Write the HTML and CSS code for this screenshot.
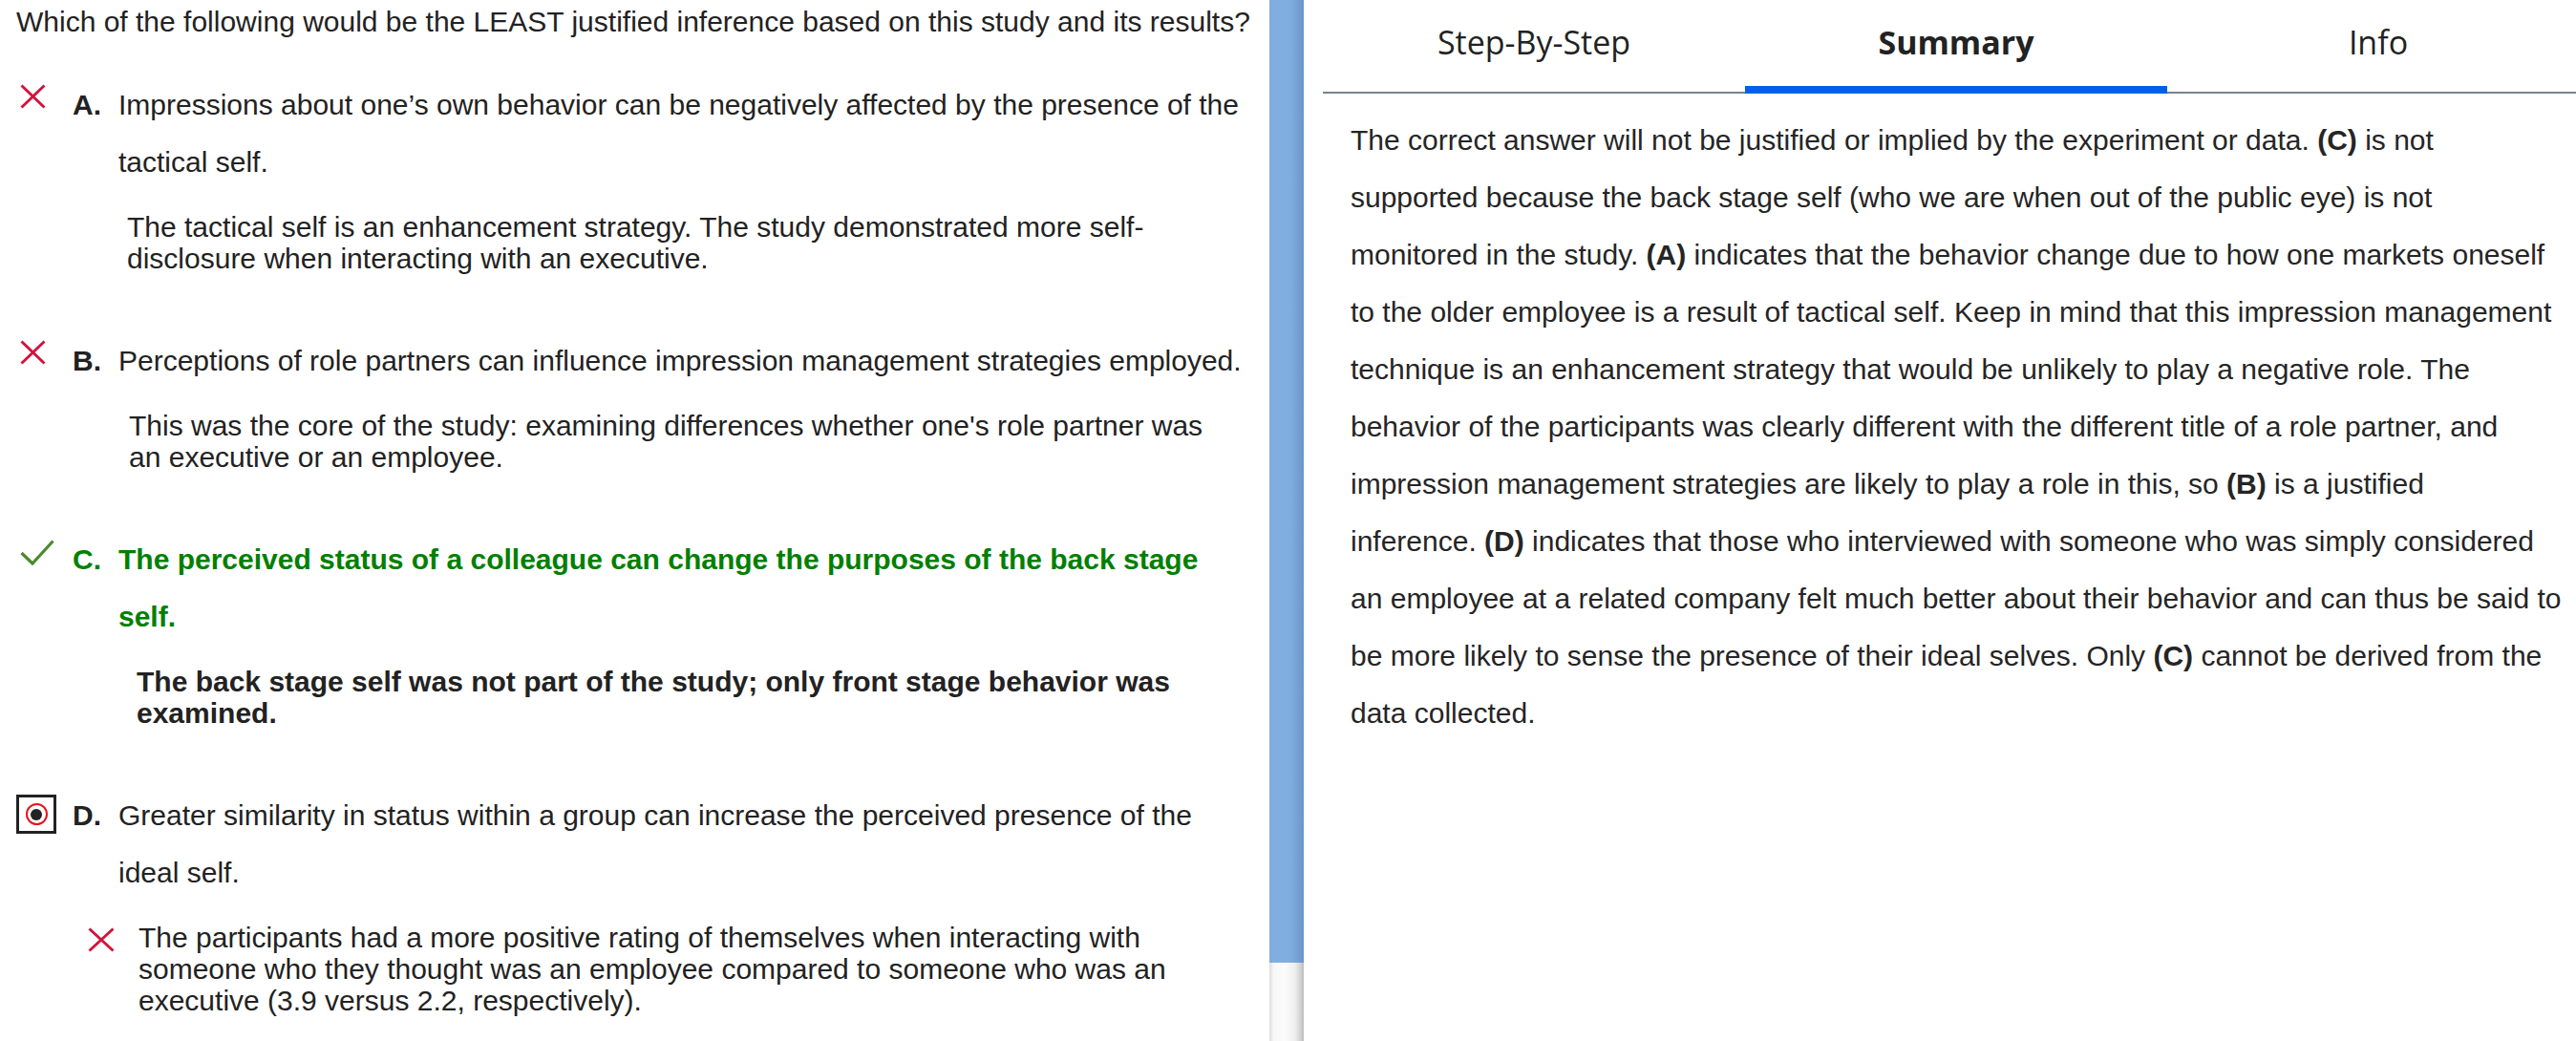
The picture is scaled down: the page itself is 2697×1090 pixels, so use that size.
FILE: index.html
```html
<!DOCTYPE html>
<html lang="en">
<head>
<meta charset="utf-8">
<title>Question review</title>
<link rel="stylesheet" href="styles.css">
</head>
<body>
<div class="page">
  <main class="question-pane">
    <p class="question">Which of the following would be the LEAST justified inference based on this study and its results?</p>

    <div class="choice">
      <div class="choice-row">
        <span class="mark mark-x"><svg width="27" height="26" viewBox="0 0 27 26"><path d="M1.5 1.5 L25.5 24.5 M25.5 1.5 L1.5 24.5" stroke="#d3143b" stroke-width="3" fill="none"/></svg></span>
        <span class="letter">A.</span>
        <span class="choice-text">Impressions about one’s own behavior can be negatively affected by the presence of the tactical self.</span>
      </div>
      <p class="feedback fb-a">The tactical self is an enhancement strategy. The study demonstrated more self-disclosure when interacting with an executive.</p>
    </div>

    <div class="choice">
      <div class="choice-row">
        <span class="mark mark-x"><svg width="27" height="26" viewBox="0 0 27 26"><path d="M1.5 1.5 L25.5 24.5 M25.5 1.5 L1.5 24.5" stroke="#d3143b" stroke-width="3" fill="none"/></svg></span>
        <span class="letter">B.</span>
        <span class="choice-text">Perceptions of role partners can influence impression management strategies employed.</span>
      </div>
      <p class="feedback fb-b">This was the core of the study: examining differences whether one's role partner was an executive or an employee.</p>
    </div>

    <div class="choice choice-correct">
      <div class="choice-row">
        <span class="mark mark-check"><svg width="36" height="27" viewBox="0 0 36 27"><path d="M1.5 14 L13 25 L34.5 1.5" stroke="#4a8a2f" stroke-width="3.2" fill="none"/></svg></span>
        <span class="letter">C.</span>
        <span class="choice-text">The perceived status of a colleague can change the purposes of the back stage self.</span>
      </div>
      <p class="feedback fb-c">The back stage self was not part of the study; only front stage behavior was examined.</p>
    </div>

    <div class="choice">
      <div class="choice-row">
        <span class="mark mark-radio"><span class="radio"><span class="radio-ring"><span class="radio-dot"></span></span></span></span>
        <span class="letter">D.</span>
        <span class="choice-text">Greater similarity in status within a group can increase the perceived presence of the ideal self.</span>
      </div>
      <div class="feedback fb-d">
        <span class="fb-icon"><svg width="28" height="26" viewBox="0 0 28 26"><path d="M1.5 1.5 L26.5 24.5 M26.5 1.5 L1.5 24.5" stroke="#d3143b" stroke-width="3" fill="none"/></svg></span>
        <p class="fb-text">The participants had a more positive rating of themselves when interacting with someone who they thought was an employee compared to someone who was an executive (3.9 versus 2.2, respectively).</p>
      </div>
    </div>
  </main>

  <div class="scrollbar">
    <div class="scroll-thumb"></div>
    <div class="scroll-track"></div>
  </div>

  <aside class="explain-pane">
    <nav class="tabs">
      <div class="tab">Step-By-Step</div>
      <div class="tab tab-active">Summary</div>
      <div class="tab">Info</div>
    </nav>
    <p class="summary">The correct answer will not be justified or implied by the experiment or data. <b>(C)</b> is not supported because the back stage self (who we are when out of the public eye) is not monitored in the study. <b>(A)</b> indicates that the behavior change due to how one markets oneself to the older employee is a result of tactical self. Keep in mind that this impression management technique is an enhancement strategy that would be unlikely to play a negative role. The behavior of the participants was clearly different with the different title of a role partner, and impression management strategies are likely to play a role in this, so <b>(B)</b> is a justified<br>inference. <b>(D)</b> indicates that those who interviewed with someone who was simply considered an employee at a related company felt much better about their behavior and can thus be said to be more likely to sense the presence of their ideal selves. Only <b>(C)</b> cannot be derived from the data collected.</p>
  </aside>
</div>
</body>
</html>
```

FILE: styles.css
```css
html, body {
  margin: 0;
  padding: 0;
  background: #ffffff;
}

.page {
  display: flex;
  height: 1090px;
  overflow: hidden;
  background: #ffffff;
}

/* ---------- left: question pane ---------- */
.question-pane {
  flex: 0 0 1329px;
  font-family: "Liberation Sans", Arial, sans-serif;
  font-size: 30px;
  color: #222222;
}

.question {
  margin: 0 0 41px;
  padding: 7px 0 0 17px;
  line-height: 32px;
}

.choice + .choice {
  margin-top: 61px;
}

.choice-row {
  display: grid;
  grid-template-columns: 76px 48px 1184px;
  line-height: 60px;
}

.mark {
  align-self: start;
  line-height: 0;
  padding-top: 8px;
}

.mark-x {
  padding-left: 21px;
}

.mark-check {
  padding-left: 21px;
  padding-top: 9px;
}

.mark-radio {
  padding-left: 17px;
}

.letter {
  font-weight: bold;
}

.choice-correct .choice-row {
  color: #008000;
  font-weight: bold;
}

.radio {
  box-sizing: border-box;
  width: 42px;
  height: 41px;
  border: 3px solid #222222;
  display: flex;
  align-items: center;
  justify-content: center;
}

.radio-ring {
  box-sizing: border-box;
  width: 23px;
  height: 23px;
  border: 2px solid #e8141b;
  border-radius: 50%;
  display: flex;
  align-items: center;
  justify-content: center;
}

.radio-dot {
  width: 12px;
  height: 12px;
  border-radius: 50%;
  background: #222222;
}

.feedback {
  margin: 21px 0 0;
  line-height: 33px;
}

.fb-a {
  margin-left: 133px;
  width: 1152px;
}

.fb-b {
  margin-left: 135px;
  width: 1150px;
}

.fb-c {
  margin-left: 143px;
  width: 1142px;
  font-weight: bold;
}

.fb-d {
  display: flex;
  align-items: flex-start;
  margin-left: 92px;
  width: 1193px;
}

.fb-icon {
  flex: 0 0 28px;
  line-height: 0;
  padding-top: 6px;
}

.fb-text {
  margin: 0 0 0 25px;
}

/* ---------- scrollbar ---------- */
.scrollbar {
  flex: 0 0 36px;
  display: flex;
  flex-direction: column;
}

.scroll-thumb {
  height: 1008px;
  background: linear-gradient(to right, #80aee0 0%, #80ade0 62%, #739fd0 85%, #6c96c6 100%);
}

.scroll-track {
  flex: 1;
  background: linear-gradient(to right, #dddddd 0%, #f7f7f7 12%, #fcfcfc 45%, #eeeeee 75%, #cfcfcf 92%, #bdbdbd 100%);
}

/* ---------- right: explanation pane ---------- */
.explain-pane {
  flex: 1;
  min-width: 0;
  overflow: hidden;
}

.tabs {
  display: flex;
  margin-left: 20px;
}

.tab {
  flex: 0 0 442px;
  box-sizing: border-box;
  height: 98px;
  padding-top: 21px;
  text-align: center;
  font-family: "Open Sans", "Noto Sans", sans-serif;
  font-size: 34px;
  color: #222222;
  box-shadow: inset 0 -2px 0 #78848c;
}

.tab-active {
  font-weight: bold;
  box-shadow: inset 0 -8px 0 #0060e6;
}

.summary {
  margin: 19px 0 0;
  padding: 0 15px 0 49px;
  font-family: "Liberation Sans", Arial, sans-serif;
  font-size: 30px;
  line-height: 60px;
  color: #252525;
}

.summary b {
  font-weight: bold;
}
```
